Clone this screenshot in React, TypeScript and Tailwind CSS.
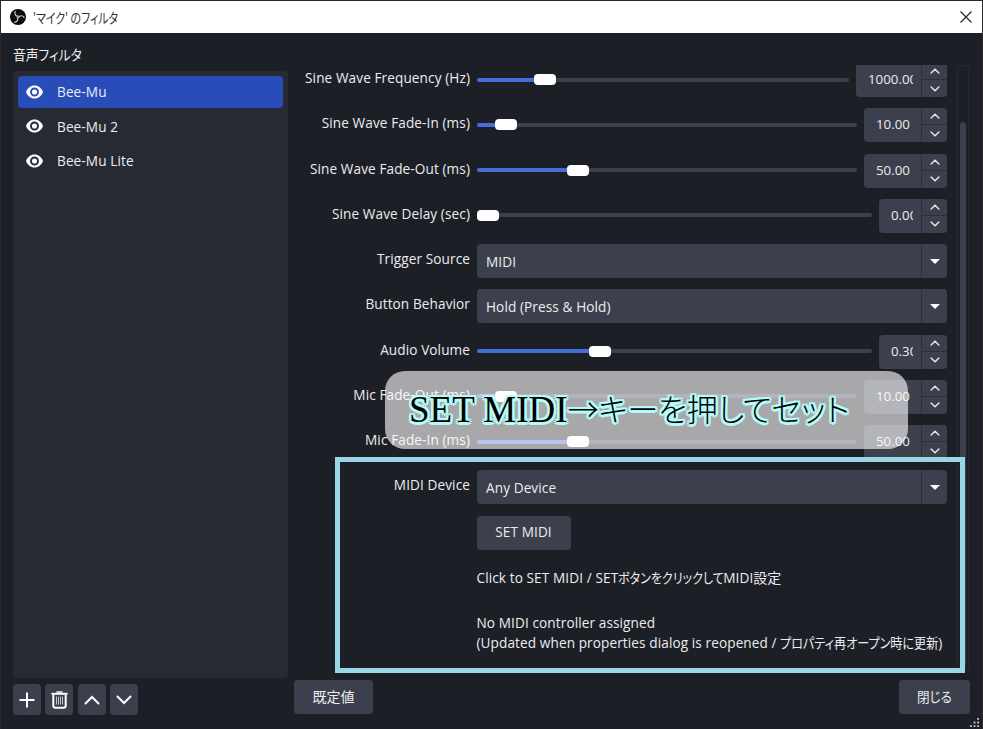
import type { ReactNode } from "react"

interface SliderRow {
  kind: "slider"
  label: string
  value: string
  knob: number
  size: "sm" | "md" | "lg"
}

interface SelectRow {
  kind: "select"
  label: string
  value: string
}

const rows: (SliderRow | SelectRow)[] = [
  { kind: "slider", label: "Sine Wave Frequency (Hz)", value: "1000.00", knob: 57.5, size: "lg" },
  { kind: "slider", label: "Sine Wave Fade-In (ms)", value: "10.00", knob: 18, size: "md" },
  { kind: "slider", label: "Sine Wave Fade-Out (ms)", value: "50.00", knob: 90, size: "md" },
  { kind: "slider", label: "Sine Wave Delay (sec)", value: "0.00", knob: 0, size: "sm" },
  { kind: "select", label: "Trigger Source", value: "MIDI" },
  { kind: "select", label: "Button Behavior", value: "Hold (Press & Hold)" },
  { kind: "slider", label: "Audio Volume", value: "0.30", knob: 112, size: "sm" },
  { kind: "slider", label: "Mic Fade-Out (ms)", value: "10.00", knob: 18, size: "md" },
  { kind: "slider", label: "Mic Fade-In (ms)", value: "50.00", knob: 90, size: "md" },
  { kind: "select", label: "MIDI Device", value: "Any Device" },
]

const filters = ["Bee-Mu", "Bee-Mu 2", "Bee-Mu Lite"]

const spinWidths = {
  sm: "w-[68px]",
  md: "w-[83px]",
  lg: "w-[91px]",
}

function Chevron({ up, className }: { up?: boolean; className: string }) {
  return (
    <svg viewBox="0 0 16 10" className={className} fill="none" stroke="currentColor" strokeLinecap="round">
      <path d={up ? "M1.5 8.5 8 2l6.5 6.5" : "M1.5 1.5 8 8l6.5-6.5"} />
    </svg>
  )
}

// pupil ring takes the colour of the row behind it
function EyeIcon({ ring }: { ring: string }) {
  return (
    <svg viewBox="0 0 17 14" className="h-[14px] w-[17px]">
      <path d="M0 7C1.5 3 4.7.5 8.5.5S15.5 3 17 7c-1.5 4-4.7 6.5-8.5 6.5S1.5 11 0 7Z" fill="#fefefe" />
      <circle cx="8.5" cy="7" r="3.5" fill="none" stroke={ring} strokeWidth="1.9" />
    </svg>
  )
}

function ObsLogo() {
  return (
    <svg viewBox="0 0 16 16" className="h-4 w-4">
      <circle cx="8" cy="8" r="8" fill="#0b0b0b" />
      <g fill="none" stroke="#d0d0d0" strokeWidth="1.2" strokeLinecap="round">
        <path d="M5.2 2.5C4.2 5 5.5 7.3 8.2 7.2" />
        <path d="M5.2 2.5C4.2 5 5.5 7.3 8.2 7.2" transform="rotate(120 8 8)" />
        <path d="M5.2 2.5C4.2 5 5.5 7.3 8.2 7.2" transform="rotate(240 8 8)" />
      </g>
    </svg>
  )
}

function TrashIcon() {
  return (
    <svg viewBox="0 0 17 18" className="h-[18px] w-[17px]" fill="none" stroke="#fefefe">
      <path d="M.5 2.8h16" strokeWidth="2" />
      <path d="M5.5 1h6" strokeWidth="1.5" />
      <path d="M2.3 4v10.5c0 1.5.7 2.2 2.2 2.2h8c1.5 0 2.2-.7 2.2-2.2V4" strokeWidth="2" />
      <path d="M5.5 5.5v8M7.5 5.5v8M9.5 5.5v8M11.5 5.5v8" strokeWidth="1" stroke="#c4c5c9" />
    </svg>
  )
}

// Japanese UI text with narrow kana
function Kana({ children, className = "" }: { children: ReactNode; className?: string }) {
  return (
    <span
      className={`inline-block origin-left whitespace-nowrap font-['Noto_Sans_CJK_JP',sans-serif] text-[14px] tracking-normal [font-feature-settings:'palt'] ${className}`}
    >
      {children}
    </span>
  )
}

function SpinBox({ value, size }: { value: string; size: "sm" | "md" | "lg" }) {
  return (
    <div className={`flex h-[34px] shrink-0 overflow-hidden rounded-[4px] bg-[#3c404d] ${spinWidths[size]}`}>
      <div className="min-w-0 flex-1 overflow-hidden border-r border-[#2d303b] pl-3 pr-2">
        <div className="overflow-hidden text-[13.3px] leading-[33px] tracking-normal">{value}</div>
      </div>
      <div className="flex w-[25px] flex-col text-[#e4e5e8]">
        <div className="flex h-[17px] items-center justify-center border-b border-[#2d303b]">
          <Chevron up className="h-[6px] w-[10px] stroke-[2.4]" />
        </div>
        <div className="flex h-[17px] items-center justify-center">
          <Chevron className="h-[6px] w-[10px] stroke-[2.4]" />
        </div>
      </div>
    </div>
  )
}

function Slider({ knob }: { knob: number }) {
  return (
    <div className="flex h-[33px] flex-1 items-center">
      <div className="h-1 rounded-l-full bg-[#476bd7]" style={{ width: knob }} />
      <div className="h-[11px] w-[22px] rounded-[4px] bg-white" />
      <div className="h-1 flex-1 rounded-r-full bg-[#3c404d]" />
    </div>
  )
}

function Select({ value }: { value: string }) {
  return (
    <div className="flex h-[34px] flex-1 rounded-[4px] bg-[#3c404d]">
      <div className="flex-1 border-r border-[#2d303b] pl-[9.5px] leading-[35px]">{value}</div>
      <div className="flex w-[25px] items-center justify-center">
        <svg viewBox="0 0 10 5" className="h-[5px] w-[10px]">
          <path d="M0 0h10L5 5Z" fill="#fefefe" />
        </svg>
      </div>
    </div>
  )
}

function PropertyRow({ label, children }: { label: string; children: ReactNode }) {
  return (
    <div className="flex h-[34px]">
      <div className="w-[176px] shrink-0 whitespace-nowrap text-right leading-[29.5px]">{label}</div>
      <div className="ml-[6.5px] flex w-[470.5px] gap-[7px]">{children}</div>
    </div>
  )
}

function ToolButton({ children }: { children: ReactNode }) {
  return (
    <button className="flex h-[31px] w-[28px] items-center justify-center rounded-[4px] bg-[#3c404d] text-[#fefefe]">
      {children}
    </button>
  )
}

export default function App() {
  return (
    <div className="relative flex h-[729px] w-[983px] flex-col overflow-hidden border-l border-r border-t border-[#2a2a2c] bg-[#1d1f26] font-['Open_Sans','Noto_Sans_CJK_JP',sans-serif] text-[13.6px] tracking-[0.1px] text-[#ececee]">
      <header className="flex h-8 shrink-0 items-center bg-white pl-[9px] pr-[10px] text-[#333]">
        <ObsLogo />
        <Kana className="ml-[7px] scale-x-[0.78]">'マイク' のフィルタ</Kana>
        <svg viewBox="0 0 12 12" className="ml-auto h-3 w-3" fill="none" stroke="#222" strokeWidth="1.2">
          <path d="M.5.5l11 11M11.5.5l-11 11" />
        </svg>
      </header>

      <div className="flex min-h-0 flex-1">
        <aside className="ml-3 w-[275px] shrink-0">
          <div className="flex h-[38px] items-center pt-1">
            <Kana className="scale-x-[0.91]">音声フィルタ</Kana>
          </div>
          <ul className="h-[607px] rounded-[4px] bg-[#272a33] p-[5px]">
            {filters.map((name, i) => (
              <li
                key={name}
                className={`mb-[3px] flex h-[31.5px] items-center rounded-[4px] pl-2 ${i === 0 ? "bg-[#284cb8]" : ""}`}
              >
                <EyeIcon ring={i === 0 ? "#284cb8" : "#272a33"} />
                <span className="ml-[14px] pt-px">{name}</span>
              </li>
            ))}
          </ul>
          <div className="mt-[6px] flex gap-[4.4px]">
            <ToolButton>
              <svg viewBox="0 0 16 16" className="h-4 w-4" stroke="currentColor" strokeWidth="2">
                <path d="M8 .5v15M.5 8h15" />
              </svg>
            </ToolButton>
            <ToolButton>
              <TrashIcon />
            </ToolButton>
            <ToolButton>
              <Chevron up className="h-[10px] w-4 stroke-2" />
            </ToolButton>
            <ToolButton>
              <Chevron className="h-[10px] w-4 stroke-2" />
            </ToolButton>
          </div>
        </aside>

        <main className="ml-1.5 flex-1 pt-8">
          <div className="flex h-[606px] overflow-hidden">
            <div className="-mt-[2px] flex flex-col gap-[11.25px]">
              {rows.map((row) => (
                <PropertyRow key={row.label} label={row.label}>
                  {row.kind === "select" ? (
                    <Select value={row.value} />
                  ) : (
                    <>
                      <Slider knob={row.knob} />
                      <SpinBox value={row.value} size={row.size} />
                    </>
                  )}
                </PropertyRow>
              ))}
              <div className="pl-[182.5px]">
                <button className="h-[34px] w-[94px] rounded-[4px] bg-[#3c404d]">SET MIDI</button>
              </div>
              <div className="h-[34px] whitespace-nowrap pl-[182.5px] leading-[32px]">
                Click to SET MIDI / SET<Kana className="-mr-[18px] scale-x-[0.86]">ボタンをクリックして</Kana>MIDI
                <Kana>設定</Kana>
              </div>
              <div className="whitespace-nowrap pl-[182.5px] pt-[7px] leading-5">
                <p>No MIDI controller assigned</p>
                <p className="-mt-px">
                  (Updated when properties dialog is reopened /{" "}
                  <Kana className="-mr-[25px] scale-x-[0.865]">プロパティ再オープン時に更新</Kana>)
                </p>
              </div>
            </div>
            <div className="ml-[10px] w-3 shrink-0 rounded-[4px] border border-[#272a33] px-[2px]">
              <div className="mt-14 h-[545px] rounded-full bg-[#3c404d]" />
            </div>
          </div>
          <div className="mt-[9px] flex justify-between pr-3">
            <button className="h-[34px] w-[79px] rounded-[4px] bg-[#3c404d]">
              <Kana>既定値</Kana>
            </button>
            <button className="h-[34px] w-[71px] rounded-[4px] bg-[#3c404d] pl-[3px]">
              <Kana className="origin-center scale-x-[0.9]">閉じる</Kana>
            </button>
          </div>
        </main>
      </div>

      {/* resize grip */}
      <svg viewBox="0 0 10 10" className="absolute bottom-[2px] right-[3px] h-[9px] w-[9px]" fill="#c8c8ca">
        <path d="M8 0h2v2H8zM4 4h2v2H4zM8 4h2v2H8zM0 8h2v2H0zM4 8h2v2H4zM8 8h2v2H8z" />
      </svg>

      <div className="absolute left-[334px] top-[456px] h-[216px] w-[630px] border-[5.5px] border-[#99d7e6]" />
      <div className="absolute left-[384px] top-[370px] h-[78px] w-[523px] rounded-[20px] bg-[#fdfdfd]/62">
        <div className="flex h-full items-center whitespace-nowrap pl-6 tracking-normal text-black [text-shadow:2.5px_0_#b5fbf8,-2.5px_0_#b5fbf8,0_2.5px_#b5fbf8,0_-2.5px_#b5fbf8,2px_2px_#b5fbf8,-2px_2px_#b5fbf8,2px_-2px_#b5fbf8,-2px_-2px_#b5fbf8,0_0_2px_#b5fbf8]">
          <span className="font-['Liberation_Serif',serif] text-[37px]">SET MIDI</span>
          <span className="-mt-1 font-['Noto_Sans_CJK_JP',sans-serif] text-[31px] font-light [font-feature-settings:'palt']">
            →キーを押してセット
          </span>
        </div>
      </div>
    </div>
  )
}
